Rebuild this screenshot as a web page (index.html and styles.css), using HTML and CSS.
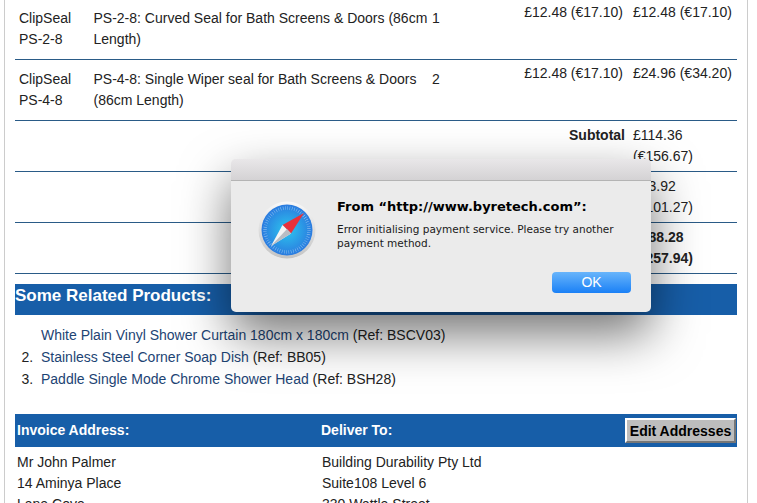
FILE: index.html
```html
<!DOCTYPE html>
<html lang="en">
<head>
    <meta charset="UTF-8">
    <meta name="viewport" content="width=device-width, initial-scale=1.0">
    <title>Checkout - Byretech</title>
    <link rel="stylesheet" href="styles.css">
</head>
<body>
    <div class="page">
        <!-- Order lines -->
        <table class="order-table">
            <colgroup>
                <col class="col-code">
                <col class="col-desc">
                <col class="col-qty">
                <col class="col-price">
                <col class="col-total">
            </colgroup>
            <tr>
                <td>ClipSeal PS-2-8</td>
                <td class="desc">PS-2-8: Curved Seal for Bath Screens &amp; Doors (86cm Length)</td>
                <td>1</td>
                <td class="money price">£12.48 (€17.10)</td>
                <td class="money">£12.48 (€17.10)</td>
            </tr>
            <tr>
                <td>ClipSeal PS-4-8</td>
                <td class="desc">PS-4-8: Single Wiper seal for Bath Screens &amp; Doors (86cm Length)</td>
                <td>2</td>
                <td class="money price">£12.48 (€17.10)</td>
                <td class="money">£24.96 (€34.20)</td>
            </tr>
            <tr class="sum-row">
                <th colspan="4">Subtotal</th>
                <td>£114.36 (€156.67)</td>
            </tr>
            <tr class="sum-row">
                <th colspan="4">Delivery</th>
                <td>£73.92 (€101.27)</td>
            </tr>
            <tr class="sum-row grand">
                <th colspan="4">Total</th>
                <td>£188.28 (€257.94)</td>
            </tr>
        </table>

        <h2 class="band related-title">Some Related Products:</h2>
        <ol class="related-list">
            <li class="no-number"><a href="#">White Plain Vinyl Shower Curtain 180cm x 180cm</a> (Ref: BSCV03)</li>
            <li><a href="#">Stainless Steel Corner Soap Dish</a> (Ref: BB05)</li>
            <li><a href="#">Paddle Single Mode Chrome Shower Head</a> (Ref: BSH28)</li>
        </ol>

        <!-- Addresses -->
        <div class="band address-bar">
            <div class="address-col">Invoice Address:</div>
            <div class="address-col deliver">Deliver To:</div>
            <button class="edit-btn">Edit Addresses</button>
        </div>
        <div class="addresses">
            <div class="address-col">
                Mr John Palmer<br>
                14 Aminya Place<br>
                Lane Cove
            </div>
            <div class="address-col deliver">
                Building Durability Pty Ltd<br>
                Suite108 Level 6<br>
                330 Wattle Street
            </div>
        </div>
    </div>

    <!-- Browser alert on top of the page -->
    <div class="alert">
        <div class="alert-title"></div>
        <div class="alert-body">
            <svg class="alert-icon" viewBox="0 0 58 58" aria-hidden="true">
                <defs>
                    <linearGradient id="rim" x1="0" y1="0" x2="0" y2="1">
                        <stop offset="0" stop-color="#f8f8f8"/>
                        <stop offset="1" stop-color="#c4c4c4"/>
                    </linearGradient>
                    <radialGradient id="face" cx="0.5" cy="0.5" r="0.55">
                        <stop offset="0" stop-color="#2cc6ee"/>
                        <stop offset="1" stop-color="#2b74de"/>
                    </radialGradient>
                </defs>
                <circle cx="29" cy="29" r="28.5" fill="url(#rim)"/>
                <circle cx="29" cy="29" r="25.5" fill="url(#face)"/>
                <circle cx="29" cy="29" r="22" fill="none" stroke="#d6eafb" stroke-width="3.5" stroke-dasharray="0.4 1.9" opacity="0.75"/>
                <polygon points="46,12 24.5,24 33,32.5" fill="#e8303a"/>
                <polygon points="13,45 24.5,24 33,32.5" fill="#f4f4f4"/>
                <polygon points="13,45 33,32.5 29,28" fill="#b9bdc4"/>
            </svg>
            <div class="alert-text">
                <h3>From “http://www.byretech.com”:</h3>
                <p>Error initialising payment service. Please try another payment method.</p>
            </div>
        </div>
        <div class="alert-actions">
            <button class="ok-btn">OK</button>
        </div>
    </div>
</body>
</html>
```

FILE: styles.css
```css
* {
    margin: 0;
    padding: 0;
    box-sizing: border-box;
    font-family: 'Liberation Sans', Arial, sans-serif;
}

html,
body {
    height: 503px;
    overflow: hidden;
    background: white;
}

.page {
    width: 744px;
    margin: -1px 0 0 4px;
    padding: 0 10px;
    border-left: 1px solid #cccccc;
    border-right: 1px solid #cccccc;
    color: #222222;
    font-size: 14px;
    line-height: 21px;
}

/* Order table */
.order-table {
    width: 722px;
    table-layout: fixed;
    border-collapse: collapse;
}

.col-code { width: 75px; }
.col-desc { width: 338px; }
.col-qty { width: 92px; }
.col-price { width: 109px; }
.col-total { width: 108px; }

.order-table td,
.order-table th {
    padding: 9px 4px;
    vertical-align: top;
    border-bottom: 1px solid #2a5b87;
}

.order-table .desc {
    padding-left: 3.5px;
    padding-right: 0;
}

.order-table .money {
    padding-top: 3px;
    padding-right: 0;
}

.order-table .price {
    padding-right: 6px;
    text-align: right;
    white-space: nowrap;
}

.sum-row th {
    text-align: right;
}

.order-table .sum-row td,
.order-table .sum-row th {
    padding-top: 4px;
    padding-bottom: 4px;
}

.order-table .sum-row td {
    padding-right: 0;
}

.grand td {
    font-weight: bold;
}

.band {
    background: #175ea8;
    color: white;
}

.related-title {
    margin-top: 10px;
    height: 31px;
    font-size: 17px;
    line-height: 23px;
}

.related-list {
    margin-top: 9px;
    padding-left: 22px;
    line-height: 22px;
}

.related-list li {
    padding-left: 4px;
}

.related-list .no-number {
    list-style: none;
}

.related-list a {
    color: #1d4474;
    text-decoration: none;
}

.address-bar {
    display: flex;
    align-items: center;
    height: 33px;
    margin-top: 24px;
    font-weight: bold;
}

.address-col {
    width: 305px;
    padding-left: 2px;
}

.address-col.deliver {
    width: 305px;
    padding-left: 1px;
}

.edit-btn {
    width: 111px;
    height: 25px;
    background: #bdbdbd;
    border: 2px solid;
    border-color: white #777777 #777777 white;
    color: black;
    font-size: 14px;
    font-weight: bold;
}

.addresses {
    display: flex;
    margin-top: 5px;
}

.addresses .deliver {
    padding-left: 2px;
}

/* Alert dialog */
.alert {
    position: absolute;
    left: 231px;
    top: 159px;
    width: 420px;
    height: 153px;
    background: #ebebeb;
    border-radius: 5px;
    box-shadow: 0 22px 50px rgba(0, 0, 0, 0.55);
}

.alert-title {
    height: 22px;
    background: linear-gradient(#e9e7e9, #d4d2d4);
    border-bottom: 1px solid #b4b4b4;
    border-radius: 5px 5px 0 0;
}

.alert-body {
    display: flex;
    padding: 20px 0 0 27px;
    height: 91px;
}

.alert-icon {
    width: 58px;
    height: 58px;
    flex-shrink: 0;
}

.alert-text {
    padding: 0 34px 0 21px;
    color: #1a1a1a;
}

.alert-text h3 {
    margin-top: -2px;
    font-family: 'DejaVu Sans', sans-serif;
    font-size: 13px;
    line-height: 16px;
    color: black;
}

.alert-text p {
    margin-top: 7px;
    font-family: 'DejaVu Sans', sans-serif;
    font-size: 10.5px;
    line-height: 14px;
}

.alert-actions {
    display: flex;
    justify-content: flex-end;
    padding-right: 20px;
}

.ok-btn {
    width: 79px;
    height: 21px;
    padding-bottom: 1px;
    background: linear-gradient(#68b5fb, #1a80f6);
    border: none;
    border-radius: 4px;
    color: white;
    font-size: 14px;
}
```
